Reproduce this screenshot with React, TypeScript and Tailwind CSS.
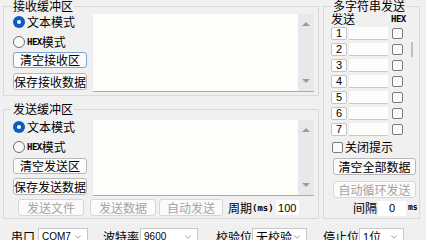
import * as React from "react";
import { ChevronDown } from "lucide-react";

const cjk = "font-['Noto_Sans_CJK_SC','Noto_Sans',sans-serif]";
const pix = "font-['DejaVu_Sans_Mono',monospace]";

const Radio: React.FC<{ checked?: boolean; children: React.ReactNode }> = ({
  checked,
  children,
}) => (
  <div className="flex h-5 items-center">
    {checked ? (
      <span className="flex h-[12px] w-[12px] items-center justify-center rounded-full bg-[#0b5cc0]">
        <span className="h-[4px] w-[4px] rounded-full bg-white" />
      </span>
    ) : (
      <span className="h-[12px] w-[12px] rounded-full border border-[#707070] bg-[#f9f9f9]" />
    )}
    <span className="ml-[2px] flex items-center">{children}</span>
  </div>
);

const Btn: React.FC<{
  children: React.ReactNode;
  disabled?: boolean;
  focus?: boolean;
  className?: string;
}> = ({ children, disabled, focus, className = "" }) => {
  const border = focus
    ? "border-[#78a4d8]"
    : disabled
      ? "border-[#d6d6d6]"
      : "border-[#b8b8b8]";
  return (
    <button
      className={`flex items-center justify-center whitespace-nowrap rounded-[3px] border bg-[#fbfbfb] ${border} ${
        disabled ? "text-[#a4a4a4]" : "text-black"
      } ${className}`}
    >
      {children}
    </button>
  );
};

const Memo: React.FC<{ className?: string }> = ({ className = "" }) => (
  <div className={`flex border-b border-[#ababab] ${className}`}>
    <div className="flex-1 bg-[#fdfdf9]" />
    <div className="flex w-[16px] flex-col items-center justify-between bg-[#e8e8eb] py-[8px]">
      <span className="h-0 w-0 border-x-[4px] border-b-[4px] border-x-transparent border-b-[#9c9c9c]" />
      <span className="h-0 w-0 border-x-[4px] border-t-[4px] border-x-transparent border-t-[#9c9c9c]" />
    </div>
  </div>
);

const Check = () => (
  <span className="h-[11px] w-[11px] rounded-[2px] border border-[#7c7c7c] bg-[#fafafa]" />
);

const Select: React.FC<{ className: string; children: React.ReactNode }> = ({
  className,
  children,
}) => (
  <div
    className={`flex h-[17px] items-center justify-between border border-[#c8c8c8] bg-white pl-[3px] pr-[4px] ${className}`}
  >
    <span className="flex items-center">{children}</span>
    <ChevronDown size={10} strokeWidth={1.5} className="text-[#666]" />
  </div>
);

const Group: React.FC<{
  title: string;
  className?: string;
  children: React.ReactNode;
}> = ({ title, className = "", children }) => (
  <fieldset className={`border border-[#d9d9d9] ${className}`}>
    <legend className="ml-[8px] px-[1px] leading-[12px]">{title}</legend>
    {children}
  </fieldset>
);

const HexText = () => (
  <span className={`${pix} text-[9px] font-bold tracking-[-0.5px]`}>HEX</span>
);

export default function App() {
  const rows = [1, 2, 3, 4, 5, 6, 7];
  return (
    <div
      className={`h-[240px] w-[426px] overflow-hidden bg-[#f0f0f0] text-[12px] leading-[12px] text-black ${cjk}`}
    >
      <div className="flex">
        <div className="w-[322px]">
          <Group title="接收缓冲区" className="ml-[3px] w-[316px] pb-[3px]">
            <div className="flex pl-[9px]">
              <div className="w-[74px]">
                <Radio checked>文本模式</Radio>
                <Radio>
                  <HexText />
                  模式
                </Radio>
                <Btn focus className="h-4 w-[74px]">
                  清空接收区
                </Btn>
                <Btn className="mt-[5px] h-[17px] w-[74px]">保存接收数据</Btn>
              </div>
              <Memo className="ml-[6px] mt-[2px] h-[78px] w-[221px]" />
            </div>
          </Group>

          <Group title="发送缓冲区" className="ml-[3px] mt-[7px] w-[316px] pb-[2px]">
            <div className="flex pl-[9px]">
              <div className="w-[74px] pt-[2px]">
                <Radio checked>文本模式</Radio>
                <Radio>
                  <HexText />
                  模式
                </Radio>
                <Btn className="mt-[1px] h-4 w-[74px]">清空发送区</Btn>
                <Btn className="mt-[4px] h-[17px] w-[74px]">保存发送数据</Btn>
              </div>
              <Memo className="ml-[6px] mt-[5px] h-[76px] w-[221px]" />
            </div>
            <div className="mt-[3px] flex h-[17px] items-center pl-[14px]">
              <Btn disabled className="h-[17px] w-[66px]">
                发送文件
              </Btn>
              <Btn disabled className="ml-[6px] h-[17px] w-[66px]">
                发送数据
              </Btn>
              <Btn disabled className="ml-[3px] h-[17px] w-[64px]">
                自动发送
              </Btn>
              <span className="ml-[5px] flex items-center">
                周期
                <span className={`${pix} text-[9px] font-bold`}>(ms)</span>
              </span>
              <div className="ml-[2px] flex h-[15px] w-[23px] items-center justify-center bg-white font-['Liberation_Sans',sans-serif] text-[11px]">
                100
              </div>
            </div>
          </Group>
        </div>

        <Group title="多字符串发送" className="ml-[1px] w-[97px] pb-[2px]">
          <div className="flex h-[13px] items-center pl-[7px]">
            <span>发送</span>
            <span className="ml-[36px] mt-[-2px]">
              <HexText />
            </span>
          </div>
          <div className="flex">
            <div className="pl-[7px]">
              {rows.map((n) => (
                <div key={n} className="flex h-4 items-center">
                  <span className="flex h-[13px] w-[16px] items-center justify-center rounded-[2px] border border-[#c4c4c4] bg-white font-['Liberation_Sans',sans-serif] text-[11px]">
                    {n}
                  </span>
                  <span className="ml-[2px] h-[13px] w-[39px] border-b border-[#c8c8c8] bg-[#fdfdfb]" />
                  <span className="ml-[4px] flex">
                    <Check />
                  </span>
                </div>
              ))}
            </div>
            <div className="ml-[8px] pt-[17px]">
              <div className="h-[15px] w-[2px] bg-[#c0c0c0]" />
            </div>
          </div>
          <div className="mt-[3px] flex h-[14px] items-center pl-[8px]">
            <Check />
            <span className="ml-[2px]">关闭提示</span>
          </div>
          <Btn className="ml-[9px] mt-[4px] h-[17px] w-[83px]">清空全部数据</Btn>
          <Btn disabled className="ml-[9px] mt-[6px] h-[17px] w-[83px]">
            自动循环发送
          </Btn>
          <div className="mt-[2px] flex h-4 items-center pl-[29px]">
            <span>间隔</span>
            <span className="ml-[1px] flex h-[15px] w-[28px] items-center justify-center bg-white font-['Liberation_Sans',sans-serif] text-[11px]">
              0
            </span>
            <span className={`${pix} ml-[2px] text-[8px] font-bold`}>ms</span>
          </div>
        </Group>
      </div>

      <div className="mt-[9px] flex h-[17px] items-center pl-[11px]">
        <span>串口</span>
        <Select className="ml-[3px] w-[50px]">
          <span className="font-['Liberation_Sans',sans-serif] text-[10px]">COM7</span>
        </Select>
        <span className="ml-[15px]">波特率</span>
        <Select className="ml-[1px] w-[58px]">
          <span className="font-['Liberation_Sans',sans-serif] text-[10px]">9600</span>
        </Select>
        <span className="ml-[18px]">校验位</span>
        <Select className="ml-[0px] w-[55px]">无校验</Select>
        <span className="ml-[16px]">停止位</span>
        <Select className="ml-[0px] w-[45px]">
          <span className="font-['Liberation_Sans',sans-serif] text-[11px]">1</span>位
        </Select>
      </div>
    </div>
  );
}
